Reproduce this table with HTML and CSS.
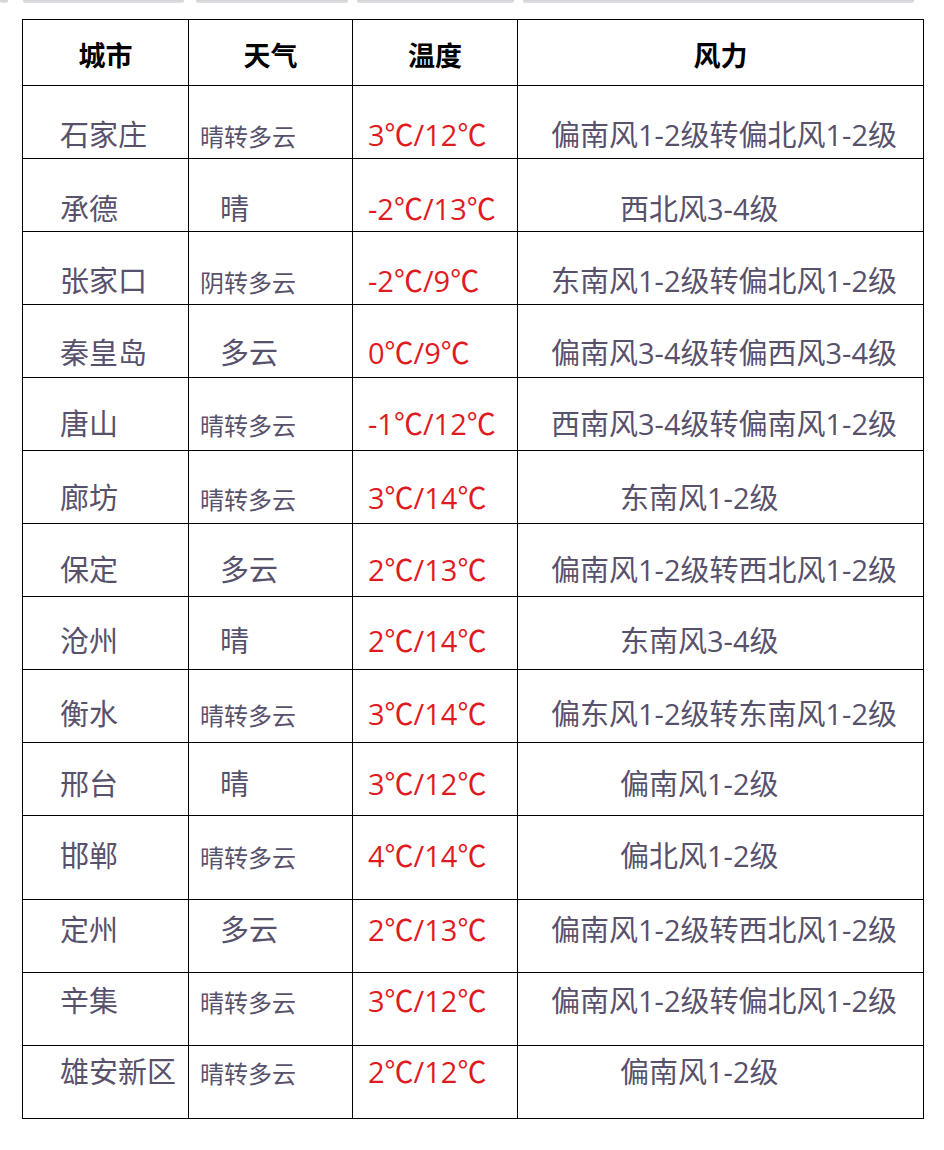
FILE: index.html
```html
<!DOCTYPE html>
<html lang="zh-CN">
<head>
<meta charset="utf-8">
<title>河北天气预报</title>
<link rel="stylesheet" href="styles.css">
</head>
<body>
<div class="topbars">
  <span class="bar b1"></span>
  <span class="bar b2"></span>
  <span class="bar b3"></span>
  <span class="bar b4"></span>
  <span class="bar b5"></span>
</div>
<table class="weather">
  <colgroup>
    <col class="c-city">
    <col class="c-wx">
    <col class="c-temp">
    <col class="c-wind">
  </colgroup>
  <thead>
    <tr><th>城市</th><th>天气</th><th>温度</th><th>风力</th></tr>
  </thead>
  <tbody>
    <tr><td class="city">石家庄</td><td class="wx">晴转多云</td><td class="temp">3℃/12℃</td><td class="wind">偏南风1-2级转偏北风1-2级</td></tr>
    <tr><td class="city">承德</td><td class="wx short">晴</td><td class="temp">-2℃/13℃</td><td class="wind short">西北风3-4级</td></tr>
    <tr><td class="city">张家口</td><td class="wx">阴转多云</td><td class="temp">-2℃/9℃</td><td class="wind">东南风1-2级转偏北风1-2级</td></tr>
    <tr><td class="city">秦皇岛</td><td class="wx short">多云</td><td class="temp">0℃/9℃</td><td class="wind">偏南风3-4级转偏西风3-4级</td></tr>
    <tr><td class="city">唐山</td><td class="wx">晴转多云</td><td class="temp">-1℃/12℃</td><td class="wind">西南风3-4级转偏南风1-2级</td></tr>
    <tr><td class="city">廊坊</td><td class="wx">晴转多云</td><td class="temp">3℃/14℃</td><td class="wind short">东南风1-2级</td></tr>
    <tr><td class="city">保定</td><td class="wx short">多云</td><td class="temp">2℃/13℃</td><td class="wind">偏南风1-2级转西北风1-2级</td></tr>
    <tr><td class="city">沧州</td><td class="wx short">晴</td><td class="temp">2℃/14℃</td><td class="wind short">东南风3-4级</td></tr>
    <tr><td class="city">衡水</td><td class="wx">晴转多云</td><td class="temp">3℃/14℃</td><td class="wind">偏东风1-2级转东南风1-2级</td></tr>
    <tr><td class="city">邢台</td><td class="wx short">晴</td><td class="temp">3℃/12℃</td><td class="wind short">偏南风1-2级</td></tr>
    <tr class="tall"><td class="city">邯郸</td><td class="wx">晴转多云</td><td class="temp">4℃/14℃</td><td class="wind short">偏北风1-2级</td></tr>
    <tr><td class="city">定州</td><td class="wx short">多云</td><td class="temp">2℃/13℃</td><td class="wind">偏南风1-2级转西北风1-2级</td></tr>
    <tr><td class="city">辛集</td><td class="wx">晴转多云</td><td class="temp">3℃/12℃</td><td class="wind">偏南风1-2级转偏北风1-2级</td></tr>
    <tr><td class="city">雄安新区</td><td class="wx">晴转多云</td><td class="temp">2℃/12℃</td><td class="wind short">偏南风1-2级</td></tr>
  </tbody>
</table>
</body>
</html>
```

FILE: styles.css
```css
html, body {
  margin: 0;
  padding: 0;
  background: #ffffff;
}

body {
  width: 944px;
  height: 1150px;
  overflow: hidden;
  font-family: "Open Sans", "Noto Sans CJK SC", sans-serif;
}

.topbars {
  display: flex;
  height: 3px;
}

.bar {
  display: block;
  height: 3px;
  background: linear-gradient(#d2d2d6, #e4e4e8);
  border-radius: 0 0 2px 2px;
}

.b1 { width: 8px; }
.b2 { width: 161px; margin-left: 15px; }
.b3 { width: 152px; margin-left: 12px; }
.b4 { width: 157px; margin-left: 9px; }
.b5 { width: 391px; margin-left: 9px; }

.weather {
  border-collapse: collapse;
  table-layout: fixed;
  width: 901px;
  margin: 16px 0 0 22px;
}

.c-city { width: 166px; }
.c-wx { width: 164px; }
.c-temp { width: 165px; }
.c-wind { width: 406px; }

.weather th,
.weather td {
  border: 1px solid #000;
  padding: 0;
  white-space: nowrap;
  overflow: visible;
}

.weather thead tr {
  height: 66px;
}

.weather th {
  font-family: "Noto Sans CJK SC", sans-serif;
  font-weight: 700;
  font-size: 27px;
  line-height: 27px;
  color: #000;
  text-align: center;
  vertical-align: top;
  padding-top: 21px;
}

.weather tbody tr {
  height: 73px;
}

.weather tbody tr.tall {
  height: 84px;
}

.weather td {
  vertical-align: baseline;
  font-size: 29px;
  line-height: 29px;
  color: #58516c;
  text-align: left;
}

.weather td.city { padding-left: 37px; }
.weather td.wx { padding-left: 11px; font-size: 24px; line-height: 24px; }
.weather td.wx.short { padding-left: 31px; font-size: 29px; line-height: 29px; }
.weather td.temp { padding-left: 15px; color: #e01b1f; }
.weather td.wind { padding-left: 33px; }
.weather td.wind.short { padding-left: 102px; }

.weather tbody tr:nth-child(1) td { padding-top: 34px; }
.weather tbody tr:nth-child(2) td { padding-top: 35px; }
.weather tbody tr:nth-child(3) td { padding-top: 34px; }
.weather tbody tr:nth-child(4) td { padding-top: 33px; }
.weather tbody tr:nth-child(5) td { padding-top: 31px; }
.weather tbody tr:nth-child(6) td { padding-top: 32px; }
.weather tbody tr:nth-child(7) td { padding-top: 31px; }
.weather tbody tr:nth-child(8) td { padding-top: 29px; }
.weather tbody tr:nth-child(9) td { padding-top: 29px; }
.weather tbody tr:nth-child(10) td { padding-top: 26px; }
.weather tbody tr:nth-child(11) td { padding-top: 25px; }
.weather tbody tr:nth-child(12) td { padding-top: 15px; }
.weather tbody tr:nth-child(13) td { padding-top: 13px; }
.weather tbody tr:nth-child(14) td { padding-top: 11px; }
```
